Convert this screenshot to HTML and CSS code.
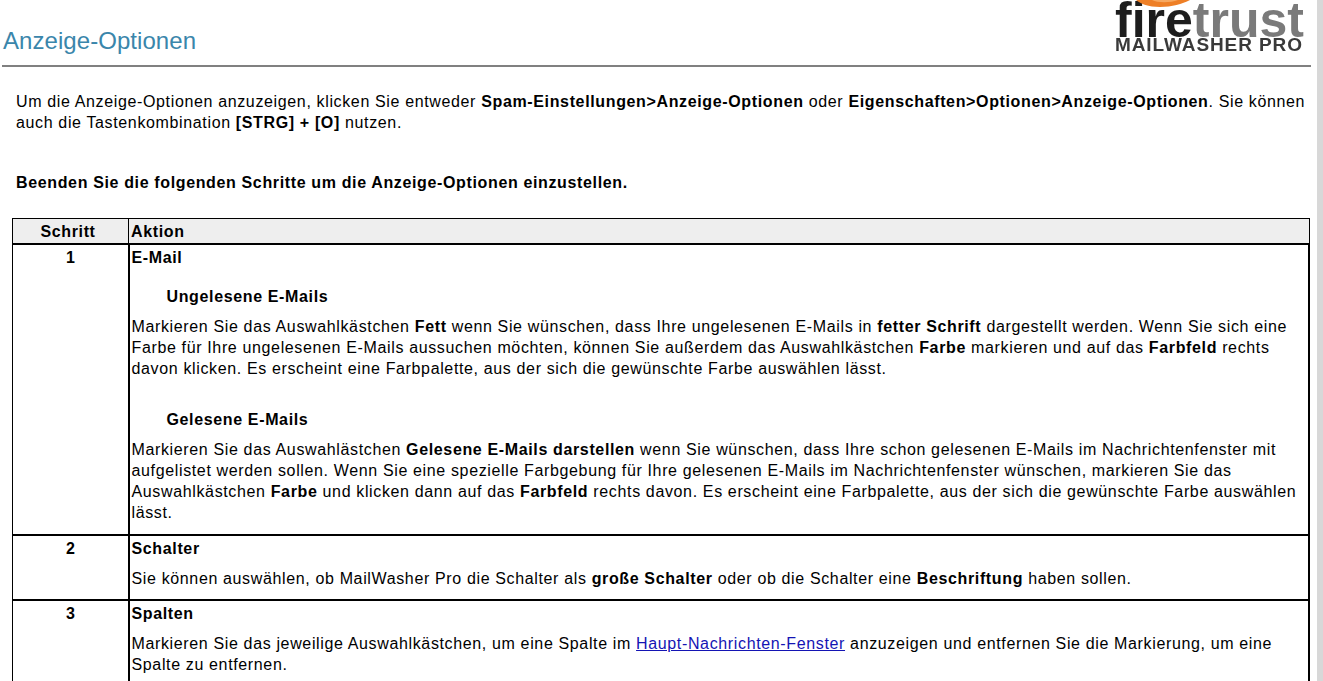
FILE: index.html
```html
<!DOCTYPE html>
<html lang="de">
<head>
<meta charset="utf-8">
<title>Anzeige-Optionen</title>
<link rel="stylesheet" href="styles.css">
</head>
<body>
<div class="page">
<main class="content">
  <header class="head">
    <h1 class="title">Anzeige-Optionen</h1>
    <div class="logo">
      <div class="logo-word"><span class="logo-fire">fire</span><span class="logo-trust">trust</span></div>
      <svg class="flame" width="56" height="8" viewBox="0 0 56 8"><path d="M0 0 C5 4 12 7 24 7 C36 7 46 4 54 0 Z" fill="#ee7f26"/><path d="M16 0 C22 3 34 3 42 0 Z" fill="#f7a860"/></svg>
      <div class="logo-sub">MAILWASHER PRO</div>
    </div>
  </header>
  <div class="intro">
    <p class="lead">Um die Anzeige-Optionen anzuzeigen, klicken Sie entweder <b>Spam-Einstellungen&gt;Anzeige-Optionen</b> oder <b>Eigenschaften&gt;Optionen&gt;Anzeige-Optionen</b>. Sie können auch die Tastenkombination <b>[STRG] + [O]</b> nutzen.</p>
    <p class="steps"><b>Beenden Sie die folgenden Schritte um die Anzeige-Optionen einzustellen.</b></p>
  </div>
  <table class="table">
    <thead>
      <tr><th class="col-step">Schritt</th><th class="col-action">Aktion</th></tr>
    </thead>
    <tbody>
      <tr>
        <td class="num">1</td>
        <td class="action">
          <div class="name">E-Mail</div>
          <h3 class="sub first">Ungelesene E-Mails</h3>
          <p class="text">Markieren Sie das Auswahlkästchen <b>Fett</b> wenn Sie wünschen, dass Ihre ungelesenen E-Mails in <b>fetter Schrift</b> dargestellt werden. Wenn Sie sich eine Farbe für Ihre ungelesenen E-Mails aussuchen möchten, können Sie außerdem das Auswahlkästchen <b>Farbe</b> markieren und auf das <b>Farbfeld</b> rechts davon klicken. Es erscheint eine Farbpalette, aus der sich die gewünschte Farbe auswählen lässt.</p>
          <h3 class="sub">Gelesene E-Mails</h3>
          <p class="text closing">Markieren Sie das Auswahlästchen <b>Gelesene E-Mails darstellen</b> wenn Sie wünschen, dass Ihre schon gelesenen E-Mails im Nachrichtenfenster mit aufgelistet werden sollen. Wenn Sie eine spezielle Farbgebung für Ihre gelesenen E-Mails im Nachrichtenfenster wünschen, markieren Sie das Auswahlkästchen <b>Farbe</b> und klicken dann auf das <b>Farbfeld</b> rechts davon. Es erscheint eine Farbpalette, aus der sich die gewünschte Farbe auswählen lässt.</p>
        </td>
      </tr>
      <tr>
        <td class="num">2</td>
        <td class="action">
          <div class="name">Schalter</div>
          <p class="text short">Sie können auswählen, ob MailWasher Pro die Schalter als <b>große Schalter</b> oder ob die Schalter eine <b>Beschriftung</b> haben sollen.</p>
        </td>
      </tr>
      <tr>
        <td class="num">3</td>
        <td class="action">
          <div class="name">Spalten</div>
          <p class="text short">Markieren Sie das jeweilige Auswahlkästchen, um eine Spalte im <a href="#">Haupt-Nachrichten-Fenster</a> anzuzeigen und entfernen Sie die Markierung, um eine Spalte zu entfernen.</p>
        </td>
      </tr>
    </tbody>
  </table>
</main>
<div class="scrollbar"></div>
</div>
</body>
</html>
```
FILE: styles.css
```css
html, body { margin: 0; height: 100%; overflow: hidden; background: #fff; }
body { font-family: "Liberation Sans", Arial, sans-serif; font-size: 16px; line-height: 21px; letter-spacing: 0.64px; color: #000; }
.page { display: flex; height: 681px; overflow: hidden; }
.content { width: 1309px; margin-left: 2px; flex: none; }
.scrollbar { width: 6px; margin-left: 6px; flex: none; background: #d8d8d8; }
.head { display: flex; justify-content: space-between; align-items: flex-end; height: 65px; border-bottom: 2px solid #808080; }
.title { margin: 0 0 10px 1px; font-size: 24px; line-height: 28px; font-weight: 400; letter-spacing: 0.06px; color: #3a86ab; }
.logo { width: 192px; height: 54px; margin-right: 4px; align-self: flex-start; position: relative; overflow: hidden; letter-spacing: 0; filter: blur(0.4px); }
.flame { position: absolute; left: 21px; top: 0; }
.logo-word { position: absolute; left: 0; top: -5px; font-size: 50px; line-height: 50px; font-weight: 700; white-space: nowrap; }
.logo-fire { color: #1d1d1d; }
.logo-trust { color: #7a7a7a; }
.logo-sub { position: absolute; left: 0; top: 37px; font-size: 19px; line-height: 16px; letter-spacing: 0.9px; font-weight: 700; color: #3a3a3a; white-space: nowrap; }
.intro { padding: 0 0 0 14px; }
.lead { margin: 24px 0 0; }
.steps { margin: 39px 0 0; }
.table { margin: 25px 0 0 10px; width: 1298px; border-collapse: collapse; table-layout: fixed; }
.table th, .table td { border: 2px solid #000; padding: 0 1px 0 2px; vertical-align: top; }
.table th { border-width: 1px 1px 2px; background: #eee; height: 25px; padding: 2px 1px 0 2px; box-sizing: border-box; line-height: 21px; }
.table td:first-child, .table th:first-child { border-left-width: 1px; }
.table .col-step { width: 116px; padding-right: 7px; text-align: center; }
.col-action { text-align: left; }
.num { text-align: center; font-weight: 700; padding-top: 2px !important; }
.action { padding-top: 2px !important; padding-bottom: 10px !important; }
.name { font-weight: 700; }
.sub { margin: 18px 0 9px 35px; font-size: 16px; line-height: 21px; font-weight: 700; }
.sub.first { margin-top: 18px; }
.text { margin: 0; }
.text + .sub { margin-top: 30px; }
.text.closing { margin-bottom: 1px; }
.text.short { margin-top: 9px; }
a { color: #1414b4; }
```
